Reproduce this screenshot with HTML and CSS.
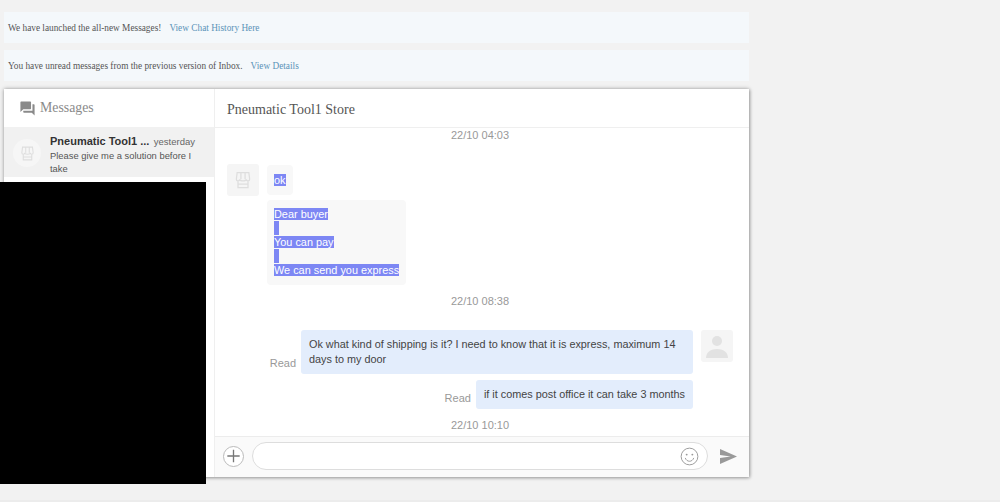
FILE: index.html
```html
<!DOCTYPE html>
<html lang="en">
<head>
<meta charset="utf-8">
<title>Messages</title>
<link rel="stylesheet" href="styles.css">
</head>
<body>
<main class="page">
  <div class="notice"><span>We have launched the all-new Messages!</span><a class="notice-link">View Chat History Here</a></div>
  <div class="notice"><span>You have unread messages from the previous version of Inbox.</span><a class="notice-link">View Details</a></div>
  <section class="card">
    <aside class="side">
      <header class="side-head">
        <svg class="side-icon" viewBox="0 0 24 24" width="17" height="17"><path fill="#8a8a8a" d="M21 6h-2v9H6v2c0 .55.45 1 1 1h11l4 4V7c0-.55-.45-1-1-1zm-4 6V3c0-.55-.45-1-1-1H3c-.55 0-1 .45-1 1v14l4-4h10c.55 0 1-.45 1-1z"/></svg>
        <span class="side-title">Messages</span>
      </header>
      <div class="conv">
        <div class="conv-avatar">
          <svg viewBox="0 0 24 24" width="17" height="17"><path class="store" d="M5 3h14l1 8c0 1-1 2-2 2s-2-1-2-2c0 1-2 2-4 2s-4-1-4-2c0 1-1 2-2 2s-2-1-2-2zM6 13v8h12v-8M9.500 3v8M14.500 3v8M6 17h12"/></svg>
        </div>
        <div class="conv-body">
          <div class="conv-top"><b class="conv-name">Pneumatic Tool1 ...</b><span class="conv-time">yesterday</span></div>
          <p class="conv-text">Please give me a solution before I take</p>
        </div>
      </div>
    </aside>
    <div class="chat">
      <header class="chat-head">Pneumatic Tool1 Store</header>
      <div class="thread">
        <div class="stamp">22/10 04:03</div>
        <div class="incoming">
          <div class="avatar">
            <svg viewBox="0 0 24 24" width="20" height="20"><path class="store" d="M5 3h14l1 8c0 1-1 2-2 2s-2-1-2-2c0 1-2 2-4 2s-4-1-4-2c0 1-1 2-2 2s-2-1-2-2zM6 13v8h12v-8M9.500 3v8M14.500 3v8M6 17h12"/></svg>
          </div>
          <div class="incoming-list">
            <div class="bubble-in"><span class="sel">ok</span></div>
            <div class="bubble-in bubble-multi">
              <span class="sel">Dear buyer</span><br>
              <span class="sel sel-empty"></span><br>
              <span class="sel">You can pay</span><br>
              <span class="sel sel-empty"></span><br>
              <span class="sel">We can send you express</span>
            </div>
          </div>
        </div>
        <div class="stamp stamp-mid">22/10 08:38</div>
        <div class="outgoing">
          <div class="outgoing-list">
            <div class="out-row">
              <span class="read">Read</span>
              <div class="bubble-out bubble-wide">Ok what kind of shipping is it? I need to know that it is express, maximum 14 days to my door</div>
            </div>
            <div class="out-row">
              <span class="read">Read</span>
              <div class="bubble-out">if it comes post office it can take 3 months</div>
            </div>
          </div>
          <div class="avatar">
            <svg viewBox="0 0 32 32" width="32" height="32"><circle cx="16" cy="11" r="5" fill="#e2e2e2"/><path fill="#e2e2e2" d="M5 28c0-6 5-9 11-9s11 3 11 9z"/></svg>
          </div>
        </div>
        <div class="stamp stamp-last">22/10 10:10</div>
      </div>
      <footer class="composer">
        <button class="plus" type="button" aria-label="Add">
          <svg viewBox="0 0 20 20" width="20" height="20"><path d="M10 3.500v13M3.500 10h13" stroke="#777" stroke-width="1.400" fill="none"/></svg>
        </button>
        <div class="field">
          <svg viewBox="0 0 20 20" width="19" height="19"><circle cx="10" cy="10" r="8.800" fill="none" stroke="#999" stroke-width="1"/><circle cx="7" cy="8" r="1" fill="#999"/><circle cx="13" cy="8" r="1" fill="#999"/><path d="M5.500 11.500c1 2.500 2.700 3.500 4.500 3.500s3.500-1 4.500-3.500" fill="none" stroke="#999" stroke-width="1"/></svg>
        </div>
        <svg class="send" viewBox="0 0 16 14" width="17" height="15"><path fill="#999" d="M0 0l16 7-16 7v-5.500l10-1.500-10-1.500z"/></svg>
      </footer>
    </div>
  </section>
  <div class="mask"></div>
  <div class="page-end"></div>
</main>
</body>
</html>
```
FILE: styles.css
```css
* { box-sizing: border-box; }
html, body { margin: 0; height: 100%; }
body { background: #f2f2f2; overflow: hidden; font-family: "Liberation Sans", Arial, sans-serif; }
.page { position: relative; width: 1000px; height: 502px; padding: 12px 251px 0 4px; display: flex; flex-direction: column; }
.notice { height: 31px; margin-bottom: 7px; padding-left: 4px; display: flex; align-items: center; background: #f4f8fb; font: 9.300px "Liberation Serif", "Times New Roman", serif; color: #555; }
.notice-link { margin-left: 8px; color: #5b93b8; }
.card { flex: none; height: 388px; margin-top: 1px; display: flex; background: #fff; box-shadow: 0 0 4px rgba(0,0,0,.35), 1px 1px 3px rgba(0,0,0,.2); }
.side { width: 211px; flex: none; border-right: 1px solid #efefef; }
.side-head { height: 38px; display: flex; align-items: center; padding-left: 15px; gap: 4px; }
.side-icon { flex: none; }
.side-title { font: 13.800px "Liberation Serif", "Times New Roman", serif; color: #8a8a8a; }
.conv { height: 50px; background: #f1f1f1; display: flex; padding: 8px 19px 0 9px; gap: 9px; }
.conv-avatar { width: 28px; height: 28px; margin-top: 4px; border-radius: 50%; background: #f6f6f6; display: flex; align-items: center; justify-content: center; flex: none; }
.store { fill: none; stroke: #dedede; stroke-width: 1.500; }
.conv-body { min-width: 0; flex: 1; }
.conv-top { display: flex; justify-content: space-between; align-items: baseline; height: 13px; line-height: 13px; white-space: nowrap; }
.conv-name { font-size: 11px; color: #333; }
.conv-time { font-size: 9.500px; color: #666; }
.conv-text { margin: 1px 0 0; font-size: 9.400px; line-height: 13px; color: #555; }
.chat { flex: 1; min-width: 0; display: flex; flex-direction: column; }
.chat-head { height: 39px; flex: none; display: flex; align-items: center; padding: 3px 0 0 12px; border-bottom: 1px solid #efefef; font: 14px "Liberation Serif", "Times New Roman", serif; color: #555; }
.thread { flex: 1; min-height: 0; overflow: hidden; padding: 0 16px 0 12px; font-size: 10.900px; }
.stamp { text-align: center; font-size: 11px; line-height: 14px; color: #999; }
.incoming { display: flex; gap: 8px; margin-top: 22px; }
.avatar { width: 32px; height: 32px; flex: none; border-radius: 3px; background: #f5f5f5; display: flex; align-items: center; justify-content: center; }
.incoming-list { display: flex; flex-direction: column; gap: 5px; align-items: flex-start; margin-top: 1px; }
.bubble-in { padding: 8px 7px; border-radius: 4px; background: #f8f8f8; line-height: 14px; color: #fff; }
.bubble-multi { padding-top: 7px; }
.sel { background: #7d87f4; color: #fff; }
.sel-empty { display: inline-block; width: 5px; height: 14px; vertical-align: top; }
.stamp-mid { margin-top: 9px; }
.outgoing { display: flex; gap: 8px; justify-content: flex-end; margin-top: 22px; }
.outgoing-list { display: flex; flex-direction: column; gap: 6px; align-items: flex-end; }
.out-row { display: flex; align-items: flex-end; gap: 5px; }
.read { font-size: 11px; line-height: 14px; margin-bottom: 4px; color: #999; }
.bubble-out { padding: 7px 8px; border-radius: 3px; background: #e3edfc; line-height: 15px; font-size: 10.850px; color: #444; }
.bubble-wide { width: 392px; }
.stamp-last { margin-top: 9px; }
.composer { height: 41px; flex: none; display: flex; align-items: center; padding: 0 12px 2px 8px; gap: 8px; background: #fafafa; border-top: 1px solid #ececec; }
.plus { width: 21px; height: 21px; padding: 0; flex: none; display: flex; align-items: center; justify-content: center; border: 1px solid #bbb; border-radius: 50%; background: #fff; }
.field { width: 456px; height: 28px; display: flex; align-items: center; justify-content: flex-end; padding-right: 8px; border: 1px solid #ddd; border-radius: 14px; background: #fff; }
.send { margin-left: 4px; flex: none; }
.mask { position: absolute; left: 0; top: 182px; width: 206px; height: 302px; background: #000; }
.page-end { position: absolute; left: 0; right: 0; bottom: 0; height: 2px; background: #ececec; }
```
